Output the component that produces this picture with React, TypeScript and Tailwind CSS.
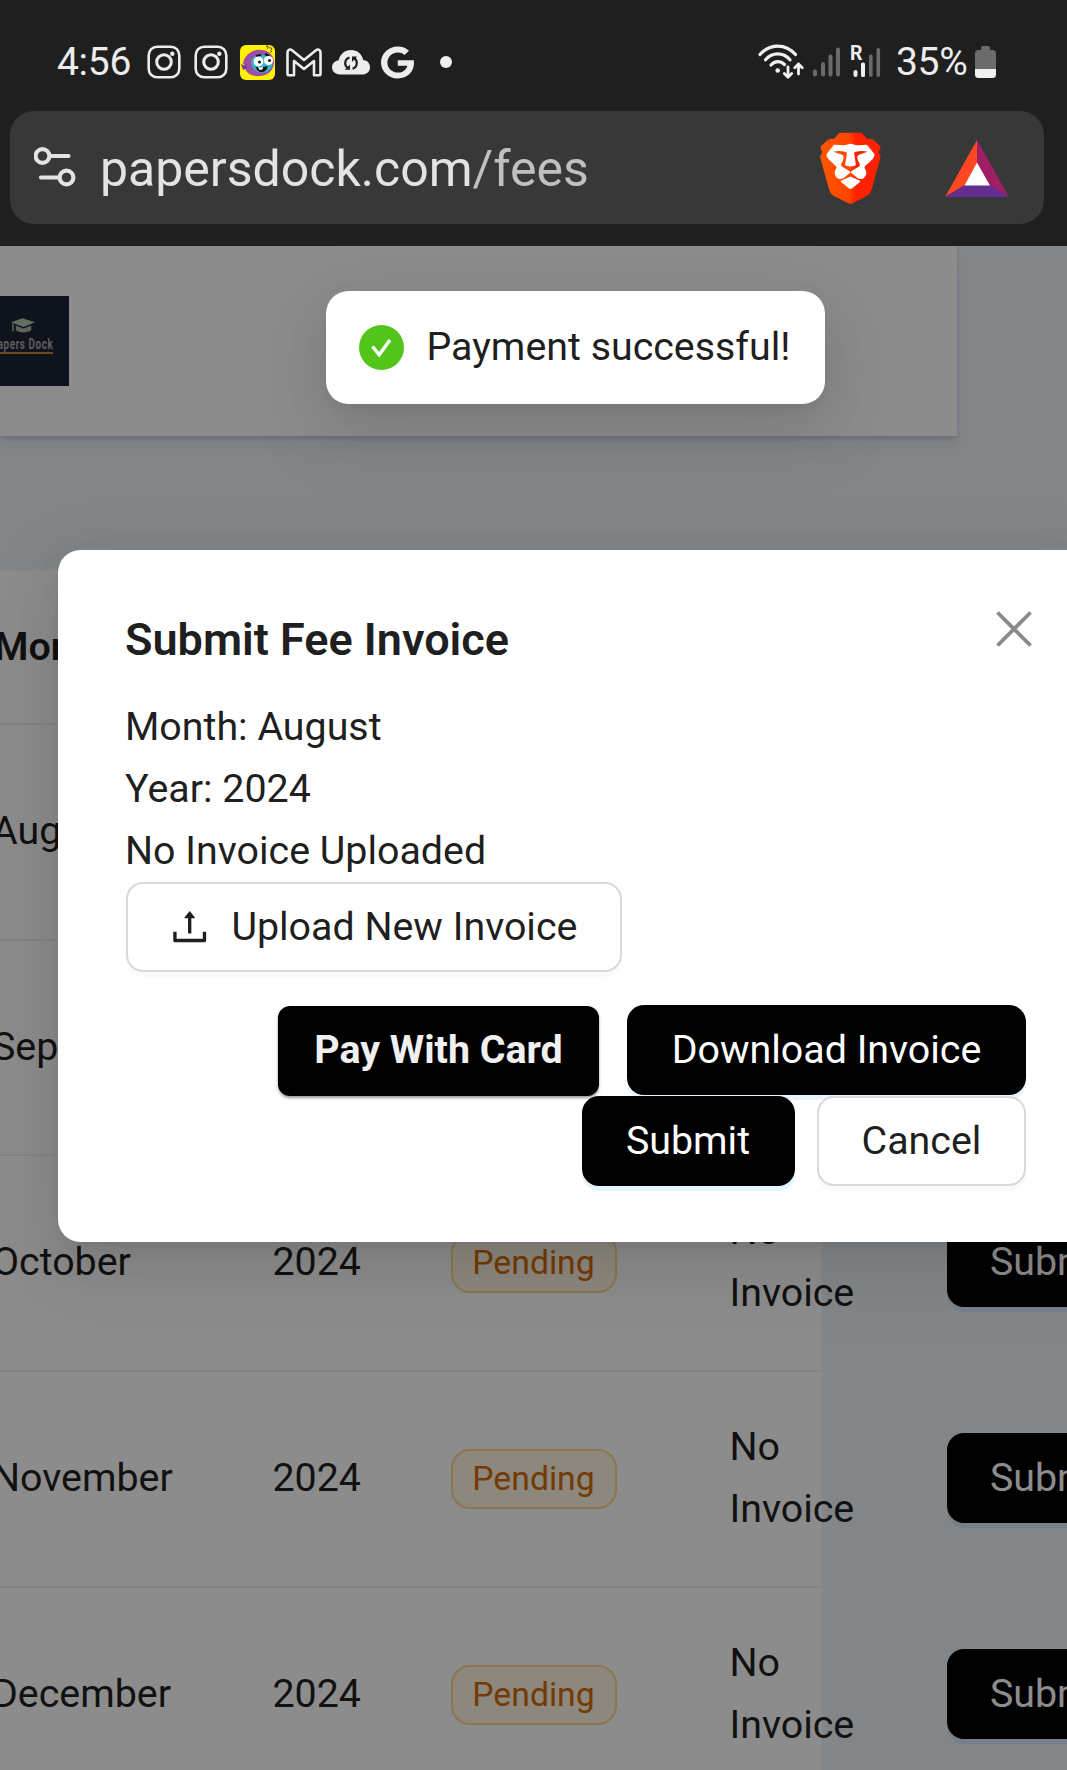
import React from "react";
import { FaGoogle } from "react-icons/fa";

function InstagramIcon() {
  return (
    <svg width="34" height="34" viewBox="0 0 34 34" fill="none" stroke="#ececec" className="shrink-0">
      <rect x="1.7" y="1.7" width="30.6" height="30.6" rx="8.5" strokeWidth="2.6" />
      <circle cx="17" cy="17" r="7.3" strokeWidth="3" />
      <circle cx="25.3" cy="8.7" r="2.2" fill="#ececec" stroke="none" />
    </svg>
  );
}

function MascotIcon() {
  return (
    <svg width="35" height="35" viewBox="0 0 35 35" className="shrink-0">
      <rect width="35" height="35" rx="6" fill="#fff100" />
      <path d="M3 18C5 9 13 4 21 5c8 0 13 6 13 12s-4 13-13 14C12 32 5 28 5 22z" fill="#9b4fa5" />
      <path d="M1 19l4 2 1-3 1 5-4 2z" fill="#7a3b96" />
      <path d="M13 13c3-3 9-4 15-2 5 3 6 8 3 12-3 5-10 6-15 3-5-4-6-9-3-13z" fill="#35b6c8" />
      <path d="M16 11l5-1M25 9l4 2" stroke="#111" strokeWidth="2" />
      <circle cx="18.5" cy="16.5" r="4.9" fill="#fff" />
      <circle cx="28.5" cy="15.5" r="4.6" fill="#fff" />
      <circle cx="19.5" cy="17" r="1.5" fill="#111" />
      <circle cx="29.5" cy="15.5" r="1.5" fill="#111" />
      <path d="M15.500 22c4 1 8 0 12-1 0 4-3 6-6 6s-5-2-6-5z" fill="#111" />
      <path d="M18 22.500l5-.5-.5 2.500-3 .5z" fill="#fff" />
      <path d="M26 1.500c2-1 3 0 1.500 2M29.500 3c2-1 3 1 1 2.500M32 6l-1.500 1.500" stroke="#222" strokeWidth="1" fill="none" />
    </svg>
  );
}

function GmailIcon() {
  return (
    <svg width="36" height="29" viewBox="0 0 36 29" fill="none" stroke="#ececec" strokeWidth="2.600" strokeLinejoin="round" className="shrink-0">
      <path d="M1.500 4.500C1.500 1.500 4.500 1 6 2.200L18 12 30 2.200c1.500-1.200 4.500-.7 4.500 2.300v21.300c0 .9-.6 1.500-1.500 1.500h-5V13l-10 8L8 13v14.300H3c-.9 0-1.500-.6-1.500-1.500z" />
    </svg>
  );
}

function CloudSyncIcon() {
  return (
    <svg width="38" height="25" viewBox="0 0 38 25" className="shrink-0">
      <path d="M8.500 24.500C3.500 24.500 0 21.500 0 17.300c0-3.700 3-6.600 6.700-7C8 4 13 0 19 0c6.300 0 11 4 12.200 10 4 .2 6.800 3.300 6.800 7.200 0 4.300-3.300 7.300-7.500 7.300z" fill="#ececec" />
      <g fill="none" stroke="#1f1f1f" strokeWidth="2.200">
        <path d="M17.500 7.500c-3 1-4.300 3.200-4.300 5.700 0 2.200 1 3.800 2.800 5" />
        <path d="M20.500 18.700c3-1 4.300-3.200 4.300-5.700 0-2.200-1-3.800-2.800-5" />
      </g>
      <path d="M12.800 19.800h5.200v-5.400zM25.200 6.600H20v5.400z" fill="#1f1f1f" />
    </svg>
  );
}

function WifiIcon() {
  return (
    <svg width="46" height="36" viewBox="0 0 46 36" fill="none" stroke="#f0f0f0" strokeWidth="3.200" strokeLinecap="round" strokeLinejoin="round" className="shrink-0">
      <path d="M2 10.500C12-.8 27.500-.8 37.500 10.500" />
      <path d="M7.500 15.800C14.500 8 25 8 32 15.800" />
      <path d="M13 21c4-4.300 9.500-4.300 13.500-.5" />
      <circle cx="19.700" cy="26.500" r="2.300" fill="#f0f0f0" stroke="none" />
      <path d="M30 23v10M26.300 29.500L30 33.200l3.700-3.700" strokeWidth="2.800" />
      <path d="M40.500 30V20M36.800 23.700l3.700-3.700 3.700 3.700" strokeWidth="2.800" />
    </svg>
  );
}

function SignalIcon() {
  return (
    <svg width="28" height="30" viewBox="0 0 28 30" fill="#6b6b6b" className="shrink-0">
      <rect x="0" y="22.500" width="4" height="7" rx="2" />
      <rect x="8" y="15" width="4" height="14.500" rx="2" />
      <rect x="15.500" y="7.500" width="4" height="22" rx="2" />
      <rect x="23" y="0.500" width="4" height="29" rx="2" />
    </svg>
  );
}

function RoamingSignalIcon() {
  return (
    <div className="relative h-[32px] w-[30px] shrink-0">
      <span className="absolute -left-px -top-[2px] text-[19.500px] font-bold leading-[20px] text-[#f0f0f0]">R</span>
      <svg width="30" height="32" viewBox="0 0 30 32" fill="#6b6b6b">
        <rect x="2.500" y="24" width="4" height="7" rx="2" fill="#f0f0f0" />
        <rect x="10" y="16.500" width="4" height="14.500" rx="1.500" fill="#f0f0f0" />
        <rect x="18" y="8.500" width="3.600" height="22.500" rx="1.800" />
        <rect x="25.500" y="2" width="3.600" height="29" rx="1.800" />
      </svg>
    </div>
  );
}

function BatteryIcon() {
  return (
    <svg width="21" height="32" viewBox="0 0 21 32" className="shrink-0">
      <path d="M6 2a2 2 0 012-2h5a2 2 0 012 2v2h2.500A3.500 3.500 0 0121 7.500V23H0V7.500A3.500 3.500 0 013.500 4H6z" fill="#6b6b6b" />
      <path d="M0 23h21v5.500a3.500 3.500 0 01-3.500 3.500h-14A3.500 3.500 0 010 28.500z" fill="#f0f0f0" />
    </svg>
  );
}

function SiteSettingsIcon() {
  return (
    <svg width="44" height="42" viewBox="0 0 44 42" fill="none" stroke="#e3e3e3" strokeWidth="4.200" strokeLinecap="round" className="-translate-y-px shrink-0">
      <circle cx="8.500" cy="10" r="6.900" />
      <path d="M17.500 10h17M7 31.500h17" />
      <circle cx="32.500" cy="31.500" r="6.900" />
    </svg>
  );
}

function BraveIcon() {
  return (
    <svg width="61" height="72" viewBox="0 0 61 73" preserveAspectRatio="none" className="shrink-0 translate-y-[0.5px]">
      <defs>
        <linearGradient id="brave-shield" x1="0" x2="1" y1="0" y2="0">
          <stop offset="0" stopColor="#ff5601" />
          <stop offset="0.480" stopColor="#ff4500" />
          <stop offset="0.600" stopColor="#ff2100" />
          <stop offset="1" stopColor="#ff2000" />
        </linearGradient>
      </defs>
      <path d="M19.500 0h22l5.700 6.600c3.500-.8 6 .3 8 2.400l5.500 5.500-2 5.500 2 4.500-9 33c-1 3.500-2.200 5-5 7L34 71c-2.500 1.600-4.500 1.600-7 0L14 64.500c-2.800-2-4-3.500-5-7L0 24.500 2.200 20 .3 14.500 6 9c2-2.100 4.500-3.200 8-2.400z" fill="url(#brave-shield)" />
      <path d="M30.500 11.500c2 0 4.500 1.400 6.500 1.400l10-.6 7.200 9.300c.6 2-.2 3.800-1.700 5.400L45 34.200c-.7 1-.4 2.200.4 3.400 1.800 3 1 7-2.200 9-2 1-4.200.7-6.200-.8l-5.500-4.600c-.8-.8-1.200-1.200-.1-2l8-5c.8-.7.500-1.800 0-2.900-1.300-2.700-2.500-4.500-1.900-7.200.5-1.300 3-2 5-2.700l5-1.900c-3.500-1.200-7-1-12.300.2-.9.400-1.200 1.100-1 2.200l1.600 10c.1 1.200-.5 1.800-1.700 2.100-2.400.6-4.800.6-7.200 0-1.200-.3-1.800-.9-1.700-2.100l1.600-10c.2-1.100-.1-1.800-1-2.200-5.300-1.200-8.800-1.400-12.300-.2l5 1.900c2 .7 4.500 1.400 5 2.700.6 2.700-.6 4.500-1.900 7.200-.5 1.100-.8 2.200 0 2.900l8 5c1.100.8.7 1.200-.1 2L24 45.800c-2 1.500-4.200 1.800-6.200.8-3.200-2-4-6-2.200-9 .8-1.200 1.100-2.400.4-3.400L8.500 27c-1.500-1.600-2.300-3.400-1.700-5.400L14 12.300l10 .6c2 0 4.500-1.400 6.500-1.400z" fill="#fff" />
      <path d="M30.500 44.500l9 4.200c1 .5 1 1 .2 1.700l-7.500 6.100c-1.200 1-2.200 1-3.400 0l-7.500-6.100c-.8-.7-.8-1.200.2-1.700z" fill="#fff" />
    </svg>
  );
}

function BatIcon() {
  return (
    <svg width="64" height="57" viewBox="0 0 64 57" className="shrink-0 translate-y-px">
      <path d="M32 0v23L20 45 0 57z" fill="#ff4724" />
      <path d="M32 0l32 57-19-12-13-22z" fill="#9e1f63" />
      <path d="M0 57l20-12h25l19 12z" fill="#662d91" />
      <path d="M32 22.500L45 45.500H19.500z" fill="#fff" />
    </svg>
  );
}

function UploadIcon() {
  return (
    <svg width="39.4" height="39.4" viewBox="64 64 896 896" fill="#1f1f1f" className="shrink-0">
      <path d="M400 317.700h73.900V656c0 4.400 3.600 8 8 8h60c4.400 0 8-3.600 8-8V317.700H624c6.700 0 10.400-7.700 6.300-12.900L518.300 163a8 8 0 00-12.600 0l-112 141.700c-4.100 5.300-.4 13 6.300 13zM878 626h-60c-4.400 0-8 3.600-8 8v154H214V634c0-4.400-3.600-8-8-8h-60c-4.400 0-8 3.600-8 8v198c0 17.700 14.300 32 32 32h684c17.700 0 32-14.300 32-32V634c0-4.400-3.600-8-8-8z" />
    </svg>
  );
}

function CloseIcon() {
  return (
    <svg width="36" height="36" viewBox="0 0 36 36" stroke="#8a8a8a" strokeWidth="3.800">
      <path d="M1.500 1.500l33 33M34.500 1.500l-33 33" />
    </svg>
  );
}

function SuccessIcon() {
  return (
    <svg width="45" height="45" viewBox="0 0 45 45" className="shrink-0">
      <circle cx="22.500" cy="22.500" r="22.500" fill="#52c41a" />
      <path d="M13.500 21.500l6.700 8.300L31 15" fill="none" stroke="#fff" strokeWidth="3.400" />
    </svg>
  );
}

function BrandLogo() {
  return (
    <div className="flex h-[90px] w-[69px] flex-col items-end bg-[#1d2432] pr-[16px] pt-[21px]">
      <svg width="25" height="17" viewBox="0 0 26 17" className="mr-[17px]">
        <path d="M12 1l13 4-12 5L0 5z" fill="#b9c9b5" />
        <path d="M5 8.500l8 3 8-3v5c-4 3-12 3-16 0z" fill="#a8b5a2" />
        <path d="M2 6.500v8" stroke="#b9c9b5" strokeWidth="1.500" />
      </svg>
      <span className="mt-[2px] origin-right scale-x-[0.700] whitespace-nowrap text-[14px] font-bold leading-[16px] tracking-[0.9px] text-[#a9abb0]">Papers Dock</span>
      <span className="h-[2px] w-[60px] bg-[#b98f35]" />
    </div>
  );
}

const months = ["August", "September", "October", "November", "December"];

function FeesTable() {
  return (
    <div className="mt-[134px] w-[822px] bg-white">
      <div className="flex h-[155px] w-[1250px] items-center border-b-2 border-[#f0f0f0] font-semibold">
        <span className="-ml-[6px]">Month</span>
      </div>
      {months.map((month) => (
        <div
          key={month}
          className="grid h-[215.700px] w-[1250px] grid-cols-[272.500px_178px_279px_217px_1fr] items-center border-b-2 border-[#f0f0f0]/90 pb-[2px]"
        >
          <span className="-ml-[8px]">{month}</span>
          <span>2024</span>
          <span className="flex h-[60px] w-[166px] translate-y-px items-center justify-center rounded-[19px] border-2 border-[#ffd591] bg-[#fff7e6] text-[33.750px] text-[#d46b08]">
            Pending
          </span>
          <span className="w-[125px]">
            No
            <br />
            Invoice
          </span>
          <button className="flex h-[90px] w-[211px] items-center justify-center rounded-[17px] bg-black text-white shadow-[0_5px_0_rgba(5,145,255,0.1)]">
            Submit
          </button>
        </div>
      ))}
    </div>
  );
}

function InvoiceModal() {
  return (
    <section className="absolute left-[57.500px] top-[304px] h-[692px] w-[1036px] rounded-[22.500px] bg-white px-[67.500px] pt-[56.250px] shadow-[0_17px_45px_0_rgba(0,0,0,0.08),0_8px_17px_-11px_rgba(0,0,0,0.12),0_25px_79px_22px_rgba(0,0,0,0.05)]">
      <button className="absolute left-[938.500px] top-[61px]" aria-label="Close">
        <CloseIcon />
      </button>
      <h2 className="mb-[22.500px] text-[45px] font-semibold leading-[67.500px]">Submit Fee Invoice</h2>
      <p>Month: August</p>
      <p>Year: 2024</p>
      <p>No Invoice Uploaded</p>
      <button className="ml-[0.5px] flex h-[90px] w-[496px] items-center gap-[22px] rounded-[17px] border-2 border-[#d9d9d9] pl-[42.500px] shadow-[0_5px_0_rgba(0,0,0,0.02)]">
        <UploadIcon />
        Upload New Invoice
      </button>
      <div className="mt-[32.750px] flex items-start justify-end gap-[28px]">
        <button className="mt-px h-[90px] w-[321px] rounded-[12px] bg-black pb-[2px] font-bold text-[#f0f0f0] shadow-[0_2px_3px_rgba(0,0,0,0.4)]">Pay With Card</button>
        <button className="h-[90px] w-[399px] rounded-[17px] bg-black text-white shadow-[0_5px_0_rgba(5,145,255,0.1)]">Download Invoice</button>
      </div>
      <div className="relative flex justify-end gap-[22.500px]">
        <button className="h-[90px] w-[213px] rounded-[17px] bg-black text-white shadow-[0_5px_0_rgba(5,145,255,0.1)]">Submit</button>
        <button className="h-[90px] w-[209px] rounded-[17px] border-2 border-[#d9d9d9] bg-white shadow-[0_5px_0_rgba(0,0,0,0.02)]">Cancel</button>
      </div>
    </section>
  );
}

function Toast() {
  return (
    <div className="absolute left-[326px] top-[45px] flex h-[113px] w-[498.500px] items-center gap-[22.500px] rounded-[22.500px] bg-white pl-[33px] shadow-[0_17px_45px_0_rgba(0,0,0,0.08),0_8px_17px_-11px_rgba(0,0,0,0.12),0_25px_79px_22px_rgba(0,0,0,0.05)]">
      <SuccessIcon />
      <span className="-translate-y-px whitespace-nowrap">Payment successful!</span>
    </div>
  );
}

export default function App() {
  return (
    <div className="flex h-[1770px] w-[1067px] flex-col overflow-hidden bg-[#1f1f1f] font-[Roboto,sans-serif]">
      <header className="h-[246px] shrink-0">
        <div className="flex h-[111px] items-center pl-[57px] pt-[13px] text-[39px] text-[#ececec]">
          <span className="w-[89.500px] tracking-[-0.3px]">4:56</span>
          <div className="flex items-center">
            <InstagramIcon />
            <span className="w-[13px]" />
            <InstagramIcon />
            <span className="w-[12px]" />
            <MascotIcon />
            <span className="w-[11px]" />
            <GmailIcon />
            <span className="w-[10px]" />
            <CloudSyncIcon />
            <span className="w-[11.500px]" />
            <FaGoogle className="h-[33px] w-[33px]" preserveAspectRatio="none" />
            <span className="ml-[26px] size-[12px] rounded-full bg-[#f0f0f0]" />
          </div>
          <div className="ml-[306px] flex items-center">
            <WifiIcon />
            <span className="w-[9px]" />
            <SignalIcon />
            <span className="w-[10px]" />
            <RoamingSignalIcon />
            <span className="ml-[15px] w-[79px] tracking-[-0.3px]">35%</span>
            <BatteryIcon />
          </div>
        </div>
        <div className="ml-[10px] flex h-[113px] w-[1034px] items-center rounded-[24px] bg-[#383838] pl-[24px]">
          <SiteSettingsIcon />
          <span className="ml-[22px] w-[720px] translate-y-px text-[50px] leading-[60px] text-[#e3e3e3]">
            papersdock.com<span className="text-[#bfc1c1]">/fees</span>
          </span>
          <BraveIcon />
          <span className="w-[64px]" />
          <BatIcon />
        </div>
      </header>
      <main className="relative flex-1 overflow-hidden bg-[#edf4f9] text-[39.375px] leading-[61.900px] text-[#1f1f1f]">
        <div className="flex h-[190px] w-[957px] items-center bg-white shadow-[0_3px_4px_rgba(30,20,60,0.14),0_11px_17px_-3px_rgba(30,20,60,0.07)]">
          <BrandLogo />
        </div>
        <FeesTable />
        <div className="absolute inset-0 bg-black/45" />
        <InvoiceModal />
        <Toast />
      </main>
    </div>
  );
}
